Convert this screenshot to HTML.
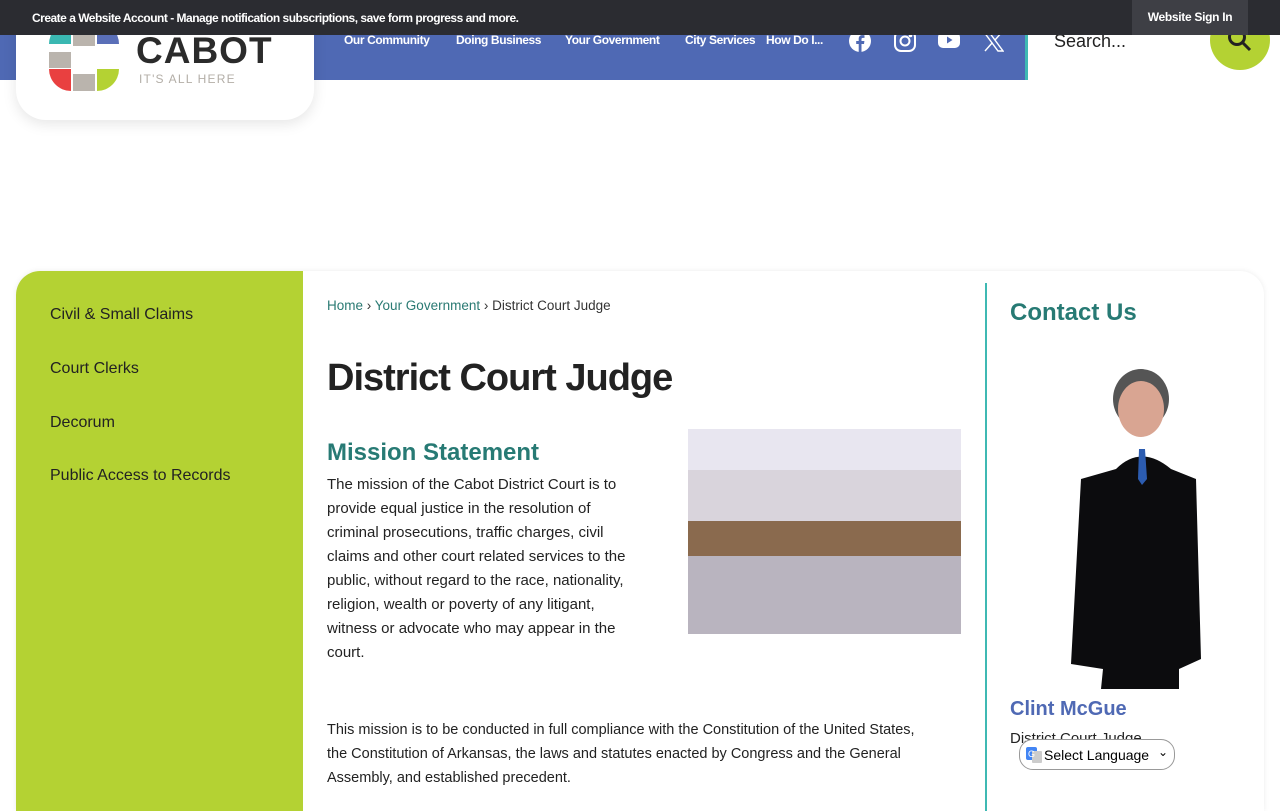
<!DOCTYPE html>
<html><head><meta charset="utf-8"><style>
*{box-sizing:border-box;margin:0;padding:0}
body{width:1280px;height:800px;overflow:hidden;background:#fff;font-family:"Liberation Sans",sans-serif;position:relative}
.top{position:absolute;left:0;top:0;width:1280px;height:35px;background:#2b2c31;z-index:5}
.top .msg{position:absolute;left:32px;top:11px;color:#fff;font-size:12px;font-weight:bold;letter-spacing:-0.5px}
.top .sign{position:absolute;left:1132px;top:0;width:116px;height:35px;background:#3e3f45;color:#fff;font-size:12px;font-weight:bold;text-align:center;line-height:35px;letter-spacing:-0.3px}
.band{position:absolute;left:0;top:35px;width:1028px;height:45px;background:#4f69b4;border-right:3px solid #3fb9b3}
.nav{position:absolute;top:33px;color:#fff;font-size:12px;font-weight:bold;letter-spacing:-0.4px}
.logo{position:absolute;left:16px;top:0;width:298px;height:120px;background:#fff;border-radius:0 0 30px 30px;box-shadow:0 4px 14px rgba(0,0,0,.1);z-index:3}
.c{position:absolute;width:22px;height:22px}
.cabot{position:absolute;left:120px;top:30px;font-size:37px;font-weight:bold;color:#2b2b2b;letter-spacing:1px}
.tag{position:absolute;left:123px;top:72px;font-size:12px;color:#b3aea7;letter-spacing:1.2px}
.search{position:absolute;left:1054px;top:31px;font-size:18px;color:#222}
.sbtn{position:absolute;left:1210px;top:10px;width:60px;height:60px;border-radius:50%;background:#b4d233}
.main{position:absolute;left:16px;top:271px;width:1248px;height:540px;background:#fff;border-radius:24px 24px 0 0;box-shadow:0 0 6px rgba(0,0,0,.08);overflow:hidden}
.side{position:absolute;left:0;top:0;width:287px;height:540px;background:#b4d233}
.side div{position:absolute;left:34px;font-size:16px;color:#222}
.content{position:absolute;left:311px;top:0}
.bc{position:absolute;left:0;top:27px;font-size:13.5px;color:#333;white-space:nowrap}
.bc a{color:#2a7a73}
h1{position:absolute;left:0;top:86px;font-size:38px;color:#222;white-space:nowrap;letter-spacing:-1px}
h2{position:absolute;left:0;top:168px;font-size:24px;color:#277a74;white-space:nowrap}
.p1{position:absolute;left:0;top:202px;width:305px;font-size:15px;line-height:24px;color:#222}
.p2{position:absolute;left:0;top:447px;width:595px;font-size:14.5px;line-height:24px;color:#222}
.photo{position:absolute;left:672px;top:158px;width:273px;height:205px;background:linear-gradient(#e8e6f0 0 20%,#d9d4dc 20% 45%,#8a6a4e 45% 62%,#b9b4bf 62%)}
.rline{position:absolute;left:969px;top:12px;width:2px;height:540px;background:#3fb9b3}
.rt{position:absolute;left:994px;top:28px;font-size:24px;font-weight:bold;color:#277a74}
.name{position:absolute;left:994px;top:427px;font-size:20px;font-weight:bold;color:#4f69b4}
.role{position:absolute;left:994px;top:459px;font-size:15px;color:#222}
.lang{position:absolute;left:1019px;top:739px;width:156px;height:31px;border:1px solid #999;border-radius:14px;background:#fff;font-size:14px;color:#000;padding:7px 0 0 24px;z-index:4}
</style></head><body>
<div class="top"><div class="msg">Create a Website Account - Manage notification subscriptions, save form progress and more.</div><div class="sign">Website Sign In</div></div>
<div class="band"></div>
<div class="nav" style="left:344px">Our Community</div>
<div class="nav" style="left:456px">Doing Business</div>
<div class="nav" style="left:565px">Your Government</div>
<div class="nav" style="left:685px">City Services</div>
<div class="nav" style="left:766px">How Do I...</div>
<svg style="position:absolute;left:849px;top:30px" width="22" height="22" viewBox="0 0 22 22"><circle cx="11" cy="11" r="11" fill="#fff"/><path d="M12.5 22V14h2.5l.4-3h-2.9V9.3c0-.9.3-1.4 1.5-1.4h1.5V5.2c-.3 0-1.2-.1-2.2-.1-2.2 0-3.6 1.3-3.6 3.7V11H7.2v3h2.5v8z" fill="#4f69b4"/></svg>
<svg style="position:absolute;left:894px;top:30px" width="22" height="22" viewBox="0 0 22 22" fill="none" stroke="#fff" stroke-width="2"><rect x="1" y="1" width="20" height="20" rx="6"/><circle cx="11" cy="11" r="4.5"/><circle cx="16.5" cy="5.5" r=".8" fill="#fff"/></svg>
<svg style="position:absolute;left:938px;top:31px" width="22" height="18" viewBox="0 0 22 18"><rect x="0" y="1" width="22" height="16" rx="5" fill="#fff"/><path d="M9 5.5v7l5.5-3.5z" fill="#4f69b4"/></svg>
<svg style="position:absolute;left:983px;top:31px" width="21" height="21" viewBox="0 0 21 21" fill="none" stroke="#fff" stroke-width="1.4"><path d="M1 1h5l14 19h-5z"/><path d="M19 1L12 9M2 20l7.5-8.5"/></svg>
<div class="logo">
<div class="c" style="left:33px;top:22px;background:#3ab8b2;border-radius:22px 0 0 0"></div>
<div class="c" style="left:57px;top:22px;height:24px;background:#bab4ad"></div>
<div class="c" style="left:81px;top:22px;background:#5a6fb8;border-radius:0 22px 0 0"></div>
<div class="c" style="left:33px;top:52px;height:16px;background:#bab4ad"></div>
<div class="c" style="left:33px;top:69px;background:#e94040;border-radius:0 0 0 22px"></div>
<div class="c" style="left:57px;top:74px;height:17px;background:#bab4ad"></div>
<div class="c" style="left:81px;top:69px;background:#b4d233;border-radius:0 0 22px 0"></div>
<div class="cabot">CABOT</div><div class="tag">IT'S ALL HERE</div>
</div>
<div class="search">Search...</div>
<div class="sbtn"><svg style="position:absolute;left:17px;top:17px" width="26" height="26" viewBox="0 0 26 26" fill="none" stroke="#222" stroke-width="3"><circle cx="10" cy="10" r="7.5"/><path d="M15.5 15.5L23 23"/></svg></div>
<div class="main">
<div class="side">
<div style="top:35px">Civil &amp; Small Claims</div>
<div style="top:89px">Court Clerks</div>
<div style="top:143px">Decorum</div>
<div style="top:196px">Public Access to Records</div>
</div>
<div class="content">
<div class="bc"><a>Home</a> › <a>Your Government</a> › District Court Judge</div>
<h1>District Court Judge</h1>
<h2>Mission Statement</h2>
<div class="p1">The mission of the Cabot District Court is to provide equal justice in the resolution of criminal prosecutions, traffic charges, civil claims and other court related services to the public, without regard to the race, nationality, religion, wealth or poverty of any litigant, witness or advocate who may appear in the court.</div>
<div class="p2">This mission is to be conducted in full compliance with the Constitution of the United States, the Constitution of Arkansas, the laws and statutes enacted by Congress and the General Assembly, and established precedent.</div>
</div>
<div class="photo"></div>
<div class="rline"></div>
<div class="rt">Contact Us</div>
<svg style="position:absolute;left:1045px;top:98px" width="160" height="320" viewBox="0 0 160 320"><ellipse cx="80" cy="30" rx="28" ry="30" fill="#555"/><ellipse cx="80" cy="40" rx="23" ry="28" fill="#d9a592"/><path d="M55 100 Q80 75 110 100 L135 110 L140 290 L118 300 L118 320 L40 320 L42 300 L10 295 L20 110z" fill="#0c0c0e"/><path d="M78 80 l6 0 l2 30 l-5 6 l-4-6z" fill="#2c5cb0"/></svg>
<div class="name">Clint McGue</div>
<div class="role">District Court Judge</div>
</div>
<div class="lang"><svg style="position:absolute;left:6px;top:7px" width="16" height="16" viewBox="0 0 16 16"><rect width="11" height="13" rx="2" fill="#4285f4"/><rect x="6" y="4" width="10" height="12" rx="1" fill="#ccc"/><text x="2" y="10" font-size="9" fill="#fff" font-family="Liberation Sans">G</text></svg>Select Language <span style="position:absolute;right:6px;top:5px;font-size:12px">⌄</span></div>
</body></html>
